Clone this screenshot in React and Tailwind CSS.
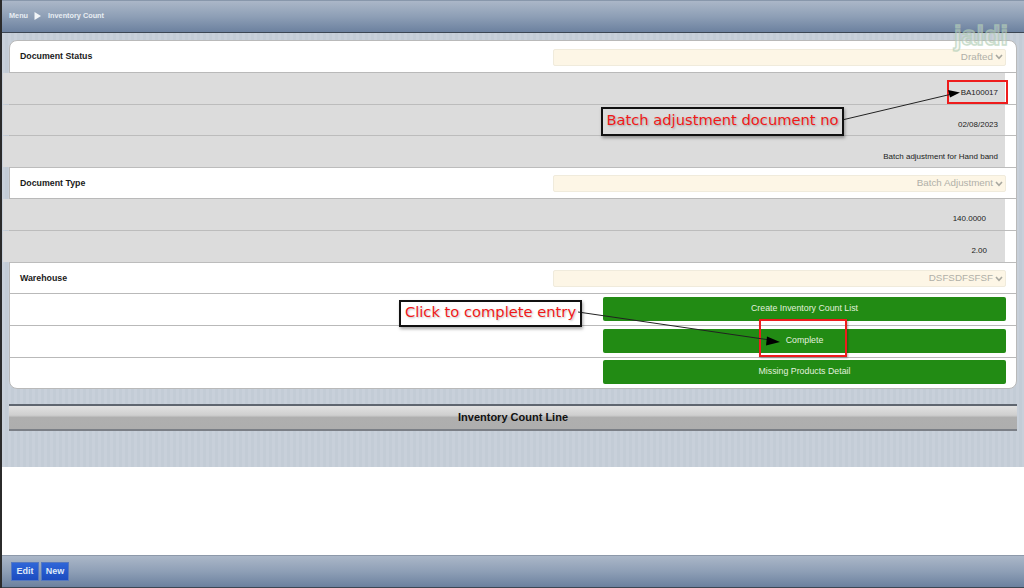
import React from 'react';

const stripes = 'bg-[repeating-linear-gradient(90deg,#c8d0da_0px,#c8d0da_3px,#c3ccd6_3px,#c3ccd6_6px)]';
const barGradient = 'bg-[linear-gradient(180deg,#abb7c8_0%,#8e9fb6_50%,#6c819f_100%)]';

function SelectRow({ label, value, height = 'h-[32px]' }) {
  return (
    <div className={`${height} shrink-0 flex items-center justify-between pl-[10px] pr-[10px] pt-[1px] border-b border-[#b9b9b9]`}>
      <span className="text-[8.8px] font-bold text-[#1a1a1a]">{label}</span>
      <div className="w-[453px] h-[17px] flex items-center justify-end bg-[#fdf6e6] border border-[#f0ebdc] rounded-[2px] text-[9.8px] text-[#b0b0a8] pr-[2px]">
        <span>{value}</span>
        <svg className="w-[8px] h-[6px] ml-[2px]" viewBox="0 0 8 6" fill="none" stroke="#a8a8a0" strokeWidth="1.6">
          <path d="M1 1l3 3.4L7 1" />
        </svg>
      </div>
    </div>
  );
}

function ValueRow({ value, height = 'h-[32px]', pad = 'pt-[14px]', right = 'pr-[7px]' }) {
  return (
    <div className={`${height} shrink-0 border-b border-[#bcbcbc]`}>
      <div className={`h-full ml-[-7px] mr-[11px] bg-[#dcdcdc] flex justify-end ${right} ${pad}`}>
        <span className="text-[8px] leading-[12px] text-[#222]">{value}</span>
      </div>
    </div>
  );
}

function ButtonRow({ label, height = 'h-[32px]', border = true }) {
  return (
    <div className={`${height} shrink-0 flex items-center justify-end pr-[10px] pb-[2px] ${border ? 'border-b border-[#b9b9b9]' : ''}`}>
      <button className="w-[403px] h-[24px] bg-[#228b14] rounded-[2px] text-[8.8px] text-[#e3f0df] text-center">
        {label}
      </button>
    </div>
  );
}

function Callout({ className, children }) {
  return (
    <div className={`absolute border-2 border-[#111] text-[#f01818] text-[14.7px] text-center shadow-[1px_2px_3px_rgba(0,0,0,0.35)] [text-shadow:1px_1px_2px_rgba(0,0,0,0.25)] font-['DejaVu_Sans',sans-serif] whitespace-nowrap ${className}`}>
      {children}
    </div>
  );
}

export default function App() {
  return (
    <div className="relative w-[1024px] h-[588px] overflow-hidden bg-white font-['Liberation_Sans',Arial,sans-serif] border-l-2 border-[#2b2b2b] flex flex-col">
      {/* top bar */}
      <header className={`h-[33px] shrink-0 ${barGradient} border-t border-[#8897ab] border-b border-b-[#3c4653] flex items-center pl-[7px] text-[7.3px] font-bold text-[#e8edf3]`}>
        <span>Menu</span>
        <svg className="w-[7px] h-[8px] ml-[6px] mr-[7px] mb-[2px]" viewBox="0 0 7 8"><path d="M0.5 0L7 4L0.5 8z" fill="#f2f5f8" /></svg>
        <span>Inventory Count</span>
      </header>

      {/* page body */}
      <main className={`h-[434px] shrink-0 ${stripes} pt-[7px]`}>
        <div className="ml-[7px] w-[1008px] h-[349px] bg-white rounded-[8px] border border-[#b9b9b9] flex flex-col">
          <SelectRow label="Document Status" value="Drafted" />
          <ValueRow value="BA100017" />
          <ValueRow value="02/08/2023" height="h-[31px]" />
          <ValueRow value="Batch adjustment for Hand band" pad="pt-[15px]" />
          <SelectRow label="Document Type" value="Batch Adjustment" height="h-[31px]" />
          <ValueRow value="140.0000" right="pr-[19px]" />
          <ValueRow value="2.00" right="pr-[18px]" />
          <SelectRow label="Warehouse" value="DSFSDFSFSF" height="h-[31px]" />
          <ButtonRow label="Create Inventory Count List" />
          <ButtonRow label="Complete" />
          <ButtonRow label="Missing Products Detail" height="h-[30px]" border={false} />
        </div>

        <div className="mt-[15px] ml-[7px] w-[1008px] h-[27px] border-t-2 border-b-2 border-t-[#5f6670] border-b-[#7b7f86] bg-[linear-gradient(180deg,#e2e2e2_0%,#cfcfcf_40%,#afafaf_50%,#aeaeae_100%)] flex items-center justify-center text-[11px] font-bold text-[#111]">
          Inventory Count Line
        </div>
      </main>

      <div className="flex-1" />

      {/* bottom bar */}
      <footer className={`h-[33px] shrink-0 ${barGradient} border-t border-[#8d99aa] border-b border-b-[#3c4653] flex items-center pl-[9px] gap-[2px]`}>
        <button className="w-[28px] h-[19px] bg-[linear-gradient(180deg,#2f66d8,#1c4cc0)] border border-[#5578c0] text-[9px] font-bold text-[#dfe8f8]">Edit</button>
        <button className="w-[28px] h-[19px] bg-[linear-gradient(180deg,#2f66d8,#1c4cc0)] border border-[#5578c0] text-[9px] font-bold text-[#dfe8f8]">New</button>
      </footer>

      {/* watermark */}
      <div className="absolute left-[952px] top-[18px] text-[27px] leading-[36px] font-bold text-[#e8efe8]/50 [-webkit-text-stroke:1.5px_#b4cfb8] opacity-70">jaldi</div>

      {/* annotations */}
      <div className="absolute left-[945px] top-[80px] w-[61px] h-[24px] border-2 border-[#ee1c1c]" />
      <div className="absolute left-[757px] top-[319px] w-[88px] h-[38px] border-2 border-[#ee1c1c] shadow-[1px_1px_2px_rgba(0,0,0,0.3)]" />
      <svg className="absolute left-[-2px] top-0 w-[1024px] h-[588px] pointer-events-none" viewBox="0 0 1024 588">
        <path d="M842 120L952 94" stroke="#222" strokeWidth="1" />
        <path d="M960 92.5L948 90L950 97.5z" fill="#000" />
        <path d="M578 312L770 340" stroke="#222" strokeWidth="1" />
        <path d="M780 342L767 336.5L766 345.5z" fill="#000" />
      </svg>
      <Callout className="left-[599px] top-[107px] w-[243px] h-[29px] leading-[22px]">Batch adjustment document no</Callout>
      <Callout className="left-[397px] top-[300px] w-[183px] h-[27px] leading-[20px]">Click to complete entry</Callout>
    </div>
  );
}
